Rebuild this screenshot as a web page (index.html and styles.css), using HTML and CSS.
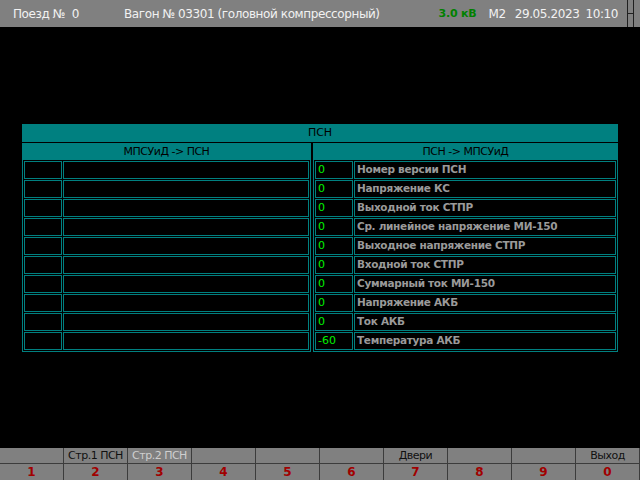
FILE: index.html
```html
<!DOCTYPE html>
<html lang="ru">
<head>
<meta charset="utf-8">
<title>ПСН</title>
<link rel="stylesheet" href="styles.css">
</head>
<body>
<header class="topbar">
  <span class="train">Поезд №  0</span>
  <span class="car">Вагон № 03301 (головной компрессорный)</span>
  <span class="volt">3.0 кВ</span>
  <span class="mode">М2</span>
  <span class="date">29.05.2023</span>
  <span class="time">10:10</span>
  <div class="widget"></div>
</header>
<main class="content">
  <section class="psn">
    <div class="title">ПСН</div>
    <div class="panels">
      <div class="panel panel-left">
        <div class="phead">МПСУиД -&gt; ПСН</div>
        <div class="rows">
          <div class="row"><div class="cell val"></div><div class="cell lbl"></div></div>
          <div class="row"><div class="cell val"></div><div class="cell lbl"></div></div>
          <div class="row"><div class="cell val"></div><div class="cell lbl"></div></div>
          <div class="row"><div class="cell val"></div><div class="cell lbl"></div></div>
          <div class="row"><div class="cell val"></div><div class="cell lbl"></div></div>
          <div class="row"><div class="cell val"></div><div class="cell lbl"></div></div>
          <div class="row"><div class="cell val"></div><div class="cell lbl"></div></div>
          <div class="row"><div class="cell val"></div><div class="cell lbl"></div></div>
          <div class="row"><div class="cell val"></div><div class="cell lbl"></div></div>
          <div class="row"><div class="cell val"></div><div class="cell lbl"></div></div>
        </div>
      </div>
      <div class="panel panel-right">
        <div class="phead">ПСН -&gt; МПСУиД</div>
        <div class="rows">
          <div class="row"><div class="cell val">0</div><div class="cell lbl">Номер версии ПСН</div></div>
          <div class="row"><div class="cell val">0</div><div class="cell lbl">Напряжение КС</div></div>
          <div class="row"><div class="cell val">0</div><div class="cell lbl">Выходной ток СТПР</div></div>
          <div class="row"><div class="cell val">0</div><div class="cell lbl">Ср. линейное напряжение МИ-150</div></div>
          <div class="row"><div class="cell val">0</div><div class="cell lbl">Выходное напряжение СТПР</div></div>
          <div class="row"><div class="cell val">0</div><div class="cell lbl">Входной ток СТПР</div></div>
          <div class="row"><div class="cell val">0</div><div class="cell lbl">Суммарный ток МИ-150</div></div>
          <div class="row"><div class="cell val">0</div><div class="cell lbl">Напряжение АКБ</div></div>
          <div class="row"><div class="cell val">0</div><div class="cell lbl">Ток АКБ</div></div>
          <div class="row"><div class="cell val">-60</div><div class="cell lbl">Температура АКБ</div></div>
        </div>
      </div>
    </div>
  </section>
</main>
<footer class="fkeys">
  <div class="key"><div class="kname"></div><div class="knum">1</div></div>
  <div class="key"><div class="kname">Стр.1 ПСН</div><div class="knum">2</div></div>
  <div class="key"><div class="kname disabled">Стр.2 ПСН</div><div class="knum">3</div></div>
  <div class="key"><div class="kname"></div><div class="knum">4</div></div>
  <div class="key"><div class="kname"></div><div class="knum">5</div></div>
  <div class="key"><div class="kname"></div><div class="knum">6</div></div>
  <div class="key"><div class="kname">Двери</div><div class="knum">7</div></div>
  <div class="key"><div class="kname"></div><div class="knum">8</div></div>
  <div class="key"><div class="kname"></div><div class="knum">9</div></div>
  <div class="key"><div class="kname">Выход</div><div class="knum">0</div></div>
</footer>
</body>
</html>
```

FILE: styles.css
```css
* { box-sizing: border-box; }
html, body { margin: 0; padding: 0; }
body {
  width: 640px;
  height: 480px;
  background: #000;
  font-family: "DejaVu Sans", "Liberation Sans", sans-serif;
  display: flex;
  flex-direction: column;
  overflow: hidden;
}

/* top bar */
.topbar {
  height: 27px;
  background: #808080;
  color: #f2f2f2;
  font-size: 12px;
  letter-spacing: -0.4px;
  display: flex;
  align-items: center;
  padding-left: 13px;
  padding-right: 6px;
  white-space: pre;
}
.car { margin-left: 45px; margin-right: auto; }
.volt { color: #008000; font-weight: bold; font-size: 11px; letter-spacing: -0.2px; }
.mode { margin-left: 12px; }
.date { margin-left: 9px; }
.time { margin-left: 6px; }
.widget {
  margin-left: 9px;
  align-self: stretch;
  width: 7px;
  border-left: 1px solid #202020;
  border-right: 1px solid #202020;
  background: linear-gradient(#202020, #202020) 0 13px / 100% 1px no-repeat;
}

/* main */
.content {
  padding-top: 97px;
  padding-left: 22px;
}
.psn { width: 596px; }
.title {
  height: 18px;
  background: #008080;
  color: #000;
  font-size: 11px;
  line-height: 18px;
  text-align: center;
  margin-bottom: 1px;
}
.panels {
  display: flex;
  gap: 2px;
}
.panel {
  border: 1px solid #008080;
}
.panel-left { width: 289px; }
.panel-right { width: 305px; }
.phead {
  height: 16px;
  background: #008080;
  color: #000;
  font-size: 11px;
  letter-spacing: -0.5px;
  line-height: 16px;
  text-align: center;
}
.rows {
  padding: 1px;
  display: flex;
  flex-direction: column;
  gap: 1px;
}
.row {
  display: grid;
  gap: 1px;
  height: 18px;
}
.panel-left .row { grid-template-columns: 38px 246px; }
.panel-right .row { grid-template-columns: 38px 262px; }
.cell {
  border: 1px solid #008080;
  font-size: 11px;
  line-height: 15px;
  padding-left: 2px;
  white-space: nowrap;
  overflow: hidden;
}
.val { color: #00f000; }
.lbl {
  color: #9a9a9a;
  font-weight: bold;
  font-size: 10.5px;
  letter-spacing: -0.3px;
}

/* function keys */
.fkeys {
  margin-top: auto;
  height: 32px;
  background: #808080;
  display: flex;
}
.key {
  width: 64px;
  border-right: 1px solid #3c3c3c;
  display: flex;
  flex-direction: column;
}
.kname {
  height: 16px;
  border-bottom: 1px solid #3c3c3c;
  color: #101010;
  font-size: 11px;
  letter-spacing: -0.5px;
  line-height: 15px;
  text-align: center;
  white-space: nowrap;
}
.kname.disabled { color: #cfcfcf; }
.knum {
  height: 16px;
  color: #a00000;
  font-weight: bold;
  font-size: 12px;
  line-height: 16px;
  text-align: center;
}
```
